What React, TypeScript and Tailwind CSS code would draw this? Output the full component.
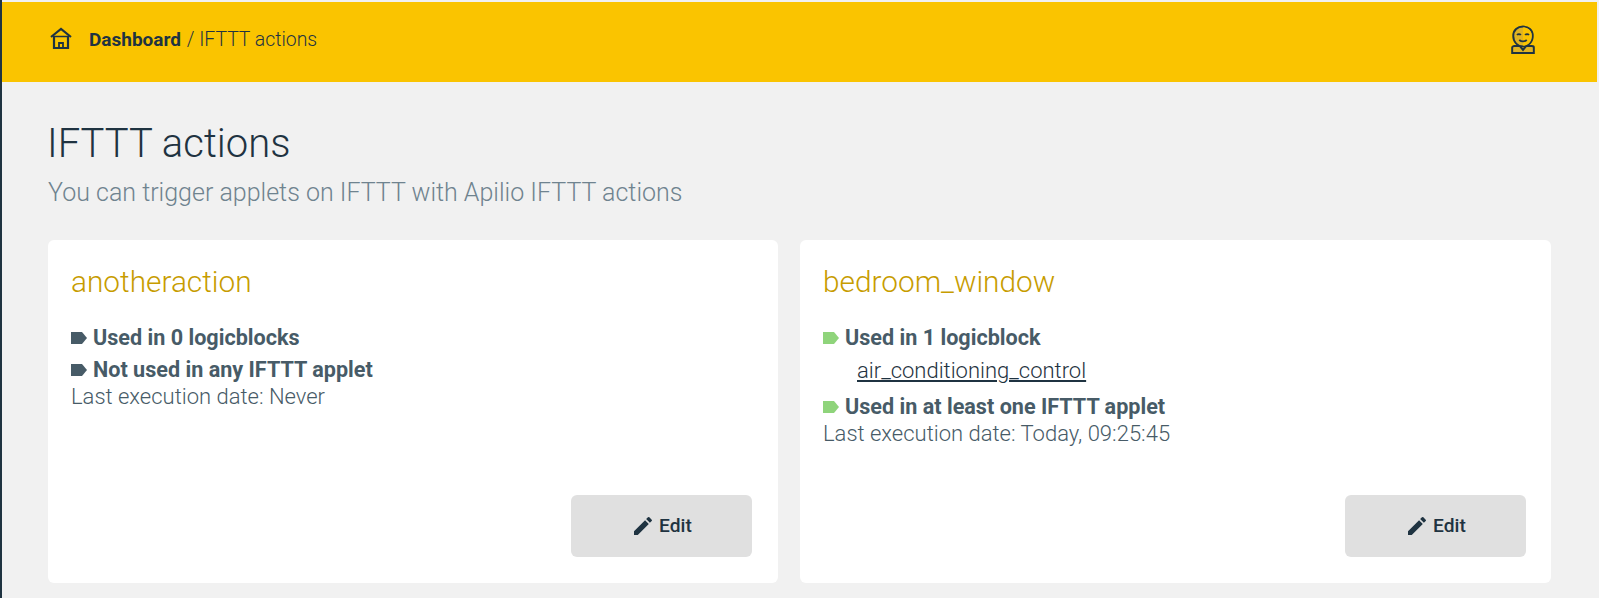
const HomeIcon = () => (
  <svg width="22" height="22" viewBox="0 0 22 22" fill="none" stroke="#1f3341" strokeWidth="2.200" className="-mt-[3px]">
    <path d="M1 10 11 2l10 8" />
    <path d="M3 9.500h16" strokeWidth="1.500" />
    <path d="M4 10v11h14V10" />
    <path d="M9 21v-5h4v5" strokeWidth="1.800" />
  </svg>
);

const UserIcon = () => (
  <svg width="26" height="30" viewBox="0 0 24 30" fill="none" stroke="#1f3341" strokeWidth="1.800" preserveAspectRatio="none" className="mt-[1px] -ml-[3px]">
    <path d="M2 22.500v5.500h20v-5.500c0-1-1-1.500-2-1.500h-5l-3 4-3-4H4c-1 0-2 .5-2 1.500z" fill="#e0b422" />
    <path d="M12 1.500c-5 0-9 3.500-9 9.500 0 6 4 10.500 9 10.500s9-4.500 9-10.500c0-6-4-9.500-9-9.500z" fill="#e0b422" />
    <path d="M12 2.400c4.500 0 8.100 3.200 8.100 8.600 0 5.500-3.600 9.600-8.100 9.600z" fill="#fac400" stroke="none" />
    <path d="M6.500 10c1-1.200 2.500-1.200 3.500 0M14 10c1-1.200 2.500-1.200 3.500 0M8.500 15c2 1.600 5 1.600 7 0" />
  </svg>
);

const EditIcon = () => (
  <svg width="24" height="24" viewBox="0 0 24 24" fill="#1f3341">
    <path d="M3 17.250V21h3.750L17.810 9.940l-3.750-3.750L3 17.250zM20.710 7.040a1 1 0 0 0 0-1.410l-2.340-2.340a1 1 0 0 0-1.410 0l-1.830 1.830 3.750 3.750 1.830-1.830z" />
  </svg>
);

const Tag = ({ color }: { color: string }) => (
  <svg width="16" height="12" viewBox="0 0 16 12" className="shrink-0">
    <path d="M0 0h11l5 6-5 6H0z" fill={color} />
  </svg>
);

const Status = ({ color, label }: { color: string; label: string }) => (
  <div className="flex items-center gap-[6px] text-[21.600px] font-bold leading-[32px]">
    <Tag color={color} />
    <span>{label}</span>
  </div>
);

interface CardProps {
  title: string;
  children: React.ReactNode;
  className?: string;
}

const Card = ({ title, children, className }: CardProps) => (
  <div className={`flex flex-col bg-white rounded-md pt-[24px] pb-[26px] pl-[23px] h-[343px] ${className}`}>
    <h2 className="text-[29.800px] font-light leading-[36px] text-[#c79c00]">{title}</h2>
    <div className="mt-[22px] text-[22px] leading-[22px] text-[#475b67]">{children}</div>
    <div className="mt-auto flex justify-end">
      <button className="flex items-center justify-center gap-[4px] w-[181px] h-[62px] bg-[#e0e0e0] rounded-md text-[19.200px] font-medium text-[#1f3341]">
        <EditIcon />
        Edit
      </button>
    </div>
  </div>
);

export default function App() {
  return (
    <div className="h-[598px] overflow-hidden bg-[#f1f1f1] border-l-2 border-l-[#1f3341] pt-[2px] font-['Roboto',sans-serif]">
      <header className="flex items-center justify-between h-[80px] mr-[2px] bg-[#fac400] pl-[48px] pr-[61px] pb-[5px] text-[19.400px] text-[#1f3341]">
        <div className="flex items-center gap-[17px]">
          <HomeIcon />
          <div>
            <span className="text-[19px] font-bold">Dashboard</span>
            <span className="ml-[1px] font-light"> / IFTTT actions</span>
          </div>
        </div>
        <UserIcon />
      </header>
      <main className="pl-[46px] pr-[46px]">
        <h1 className="mt-[38px] -ml-[1px] text-[40px] font-light leading-[48px] text-[#1f3341]">IFTTT actions</h1>
        <p className="mt-[10px] text-[25px] font-light leading-[30px] text-[#6f838f]">You can trigger applets on IFTTT with Apilio IFTTT actions</p>
        <div className="mt-[32px] flex gap-[22px]">
          <Card title="anotheraction" className="w-[730px] pr-[26px]">
            <Status color="#475b67" label="Used in 0 logicblocks" />
            <Status color="#475b67" label="Not used in any IFTTT applet" />
            <div className="font-light">Last execution date: Never</div>
          </Card>
          <Card title="bedroom_window" className="w-[751px] pr-[25px]">
            <Status color="#8fd47b" label="Used in 1 logicblock" />
            <a className="block pl-[34px] mb-[3px] leading-[34px] font-light text-[#1f3341] underline">air_conditioning_control</a>
            <Status color="#8fd47b" label="Used in at least one IFTTT applet" />
            <div className="font-light">Last execution date: Today, 09:25:45</div>
          </Card>
        </div>
      </main>
    </div>
  );
}
